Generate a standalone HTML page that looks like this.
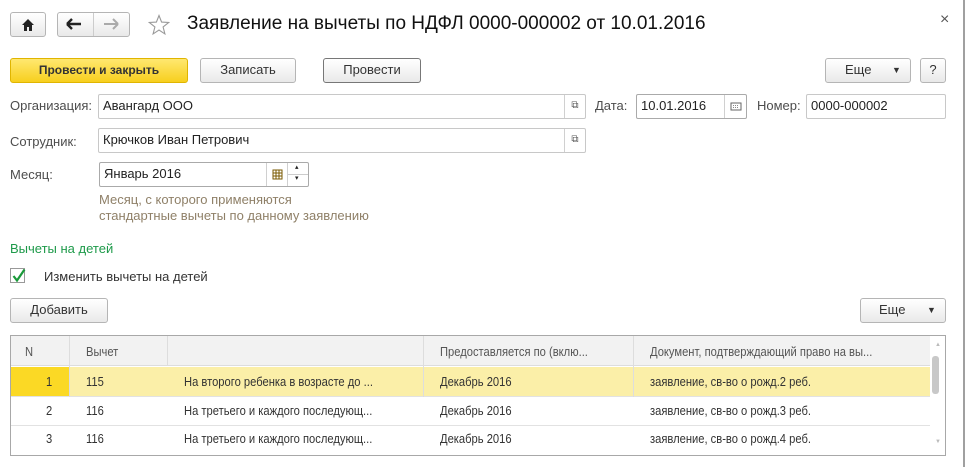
<!DOCTYPE html>
<html><head><meta charset="utf-8"><style>
*{box-sizing:border-box;margin:0;padding:0}
body{width:968px;height:467px;background:#fff;font-family:"Liberation Sans",Arial,sans-serif;font-size:13px;color:#333;position:relative;overflow:hidden}
.a{position:absolute}
.btn{position:absolute;border:1px solid #b5b5b5;border-radius:3px;background:linear-gradient(#fff,#e9e9e9);text-align:center;color:#333;font-size:13px;line-height:22px}
.inp{position:absolute;border:1px solid #c8c8c8;border-radius:2px;background:#fff;font-size:13px;line-height:22px;padding-left:4px;color:#222}
.lbl{position:absolute;color:#4d4d4d;font-size:13px}
.seg{position:absolute;top:0;bottom:0;border-left:1px solid #d0d0d0}
.t{position:absolute;font-size:13px;color:#333;white-space:nowrap}
.n{transform:scaleX(.86);transform-origin:left top}
</style></head><body>
<div class="a" style="right:3px;top:0;width:2px;height:467px;background:#a0a0a0"></div>

<div class="btn" style="left:10px;top:12px;width:36px;height:25px"><svg width="14" height="14" viewBox="0 0 14 14" style="margin-top:5px"><path d="M7 1L1 7h2v6h3V9h2v4h3V7h2z" fill="#222"/></svg></div>
<div class="btn" style="left:57px;top:12px;width:73px;height:25px"></div>
<div class="a" style="left:93px;top:13px;width:1px;height:23px;background:#ccc"></div>
<svg class="a" style="left:66px;top:18px" width="16" height="12"><path d="M1 6h14M1 6l5-5M1 6l5 5" stroke="#222" stroke-width="2.4" fill="none"/></svg>
<svg class="a" style="left:103px;top:18px" width="16" height="12"><path d="M1 6h14M15 6l-5-5M15 6l-5 5" stroke="#aaa" stroke-width="2" fill="none"/></svg>
<svg class="a" style="left:148px;top:14px" width="22" height="22" viewBox="0 0 22 22"><path d="M11 1.5l2.6 6.6 7 .4-5.5 4.5 1.8 6.9L11 16l-5.9 3.9 1.8-6.9L1.4 8.5l7-.4z" fill="none" stroke="#999" stroke-width="1.1"/></svg>
<div class="t" style="left:187px;top:13px;font-size:19px;color:#111">Заявление на вычеты по НДФЛ 0000-000002 от 10.01.2016</div>
<div class="t" style="left:940px;top:11px;font-size:16px;color:#555">×</div>

<div class="btn" style="left:10px;top:58px;width:178px;height:25px;background:linear-gradient(#ffe870,#f7cf1e);border-color:#e0b500;font-weight:bold;color:#333;font-size:12px">Провести и закрыть</div>
<div class="btn" style="left:200px;top:58px;width:96px;height:25px">Записать</div>
<div class="btn" style="left:323px;top:58px;width:98px;height:25px;border-color:#777">Провести</div>
<div class="btn" style="left:825px;top:58px;width:86px;height:25px;text-align:left;padding-left:19px">Еще<span style="position:absolute;left:66px;top:0;font-size:9px">▼</span></div>
<div class="btn" style="left:920px;top:58px;width:26px;height:25px">?</div>

<div class="lbl" style="left:10px;top:98px">Организация:</div>
<div class="inp" style="left:98px;top:94px;width:488px;height:25px">Авангард ООО<div class="seg" style="left:465px;width:21px;text-align:center;font-size:10px;color:#555">⧉</div></div>
<div class="lbl" style="left:595px;top:98px">Дата:</div>
<div class="inp" style="left:636px;top:94px;width:111px;height:25px;border-color:#aaa">10.01.2016<div class="seg" style="left:87px;width:22px"><svg width="22" height="23"><rect x="6" y="8" width="10" height="7" fill="none" stroke="#666"/><path d="M8 10.5h6M8 12.5h6" stroke="#888" stroke-dasharray="1 1"/></svg></div></div>
<div class="lbl" style="left:757px;top:98px">Номер:</div>
<div class="inp" style="left:806px;top:94px;width:140px;height:25px">0000-000002</div>

<div class="lbl" style="left:10px;top:134px">Сотрудник:</div>
<div class="inp" style="left:98px;top:128px;width:488px;height:25px">Крючков Иван Петрович<div class="seg" style="left:465px;width:21px;text-align:center;font-size:10px;color:#555">⧉</div></div>

<div class="lbl" style="left:10px;top:167px">Месяц:</div>
<div class="inp" style="left:99px;top:162px;width:210px;height:25px;border-color:#aaa">Январь 2016<div class="seg" style="left:166px;width:21px"><svg width="21" height="23"><rect x="6" y="7" width="9" height="9" fill="none" stroke="#7a5a00"/><path d="M6 10h9M6 13h9M9 7v9M12 7v9" stroke="#7a5a00"/></svg></div><div class="seg" style="left:187px;width:21px"><div style="position:absolute;left:0;right:0;top:11px;border-top:1px solid #ccc"></div><span style="position:absolute;left:7px;top:-6px;font-size:7px">▴</span><span style="position:absolute;left:7px;top:5px;font-size:7px">▾</span></div></div>
<div class="t" style="left:99px;top:192px;color:#8f8068;line-height:16px">Месяц, с которого применяются<br>стандартные вычеты по данному заявлению</div>

<div class="t" style="left:10px;top:241px;color:#1e9a4a">Вычеты на детей</div>
<div class="a" style="left:10px;top:268px;width:15px;height:15px;border:1px solid #999;background:#fff"></div>
<svg class="a" style="left:10px;top:266px" width="18" height="18"><path d="M3.5 10l3.5 4.5 7.5-11" stroke="#1a9a3a" stroke-width="2.2" fill="none"/></svg>
<div class="t" style="left:44px;top:269px">Изменить вычеты на детей</div>

<div class="btn" style="left:10px;top:298px;width:98px;height:25px">Добавить</div>
<div class="btn" style="left:860px;top:298px;width:86px;height:25px;text-align:left;padding-left:18px">Еще<span style="position:absolute;left:66px;top:0;font-size:9px">▼</span></div>

<div class="a" style="left:10px;top:335px;width:936px;height:121px;border:1px solid #a8a8a8"></div>
<div class="a" style="left:11px;top:336px;width:919px;height:30px;background:#f2f2f2;border-bottom:1px solid #ddd"></div>
<div class="a" style="left:11px;top:367px;width:919px;height:29px;background:#fbefa8"></div>
<div class="a" style="left:11px;top:367px;width:58px;height:29px;background:#fbd925"></div>
<div class="a" style="left:11px;top:396px;width:919px;height:1px;background:#e2e2e2"></div>
<div class="a" style="left:11px;top:425px;width:919px;height:1px;background:#e2e2e2"></div>
<div class="a" style="left:69px;top:336px;width:1px;height:61px;background:#ddd"></div>
<div class="a" style="left:167px;top:336px;width:1px;height:30px;background:#ddd"></div>
<div class="a" style="left:423px;top:336px;width:1px;height:61px;background:#ddd"></div>
<div class="a" style="left:633px;top:336px;width:1px;height:61px;background:#ddd"></div>
<div class="a" style="left:932px;top:356px;width:7px;height:38px;background:#c8c8c8;border-radius:3px"></div>
<div class="t" style="left:935px;top:342px;font-size:6px;color:#bbb">▲</div>
<div class="t" style="left:935px;top:439px;font-size:6px;color:#bbb">▼</div>

<div class="t n" style="left:25px;top:344px;color:#555">N</div>
<div class="t n" style="left:86px;top:344px;color:#555">Вычет</div>
<div class="t n" style="left:440px;top:344px;color:#555">Предоставляется по (вклю...</div>
<div class="t n" style="left:650px;top:344px;color:#555">Документ, подтверждающий право на вы...</div>

<div class="t n" style="left:46px;top:374px">1</div>
<div class="t n" style="left:86px;top:374px">115</div>
<div class="t n" style="left:184px;top:374px">На второго ребенка в возрасте до ...</div>
<div class="t n" style="left:440px;top:374px">Декабрь 2016</div>
<div class="t n" style="left:650px;top:374px">заявление, св-во о рожд.2 реб.</div>

<div class="t n" style="left:46px;top:403px">2</div>
<div class="t n" style="left:86px;top:403px">116</div>
<div class="t n" style="left:184px;top:403px">На третьего и каждого последующ...</div>
<div class="t n" style="left:440px;top:403px">Декабрь 2016</div>
<div class="t n" style="left:650px;top:403px">заявление, св-во о рожд.3 реб.</div>

<div class="t n" style="left:46px;top:431px">3</div>
<div class="t n" style="left:86px;top:431px">116</div>
<div class="t n" style="left:184px;top:431px">На третьего и каждого последующ...</div>
<div class="t n" style="left:440px;top:431px">Декабрь 2016</div>
<div class="t n" style="left:650px;top:431px">заявление, св-во о рожд.4 реб.</div>
</body></html>
